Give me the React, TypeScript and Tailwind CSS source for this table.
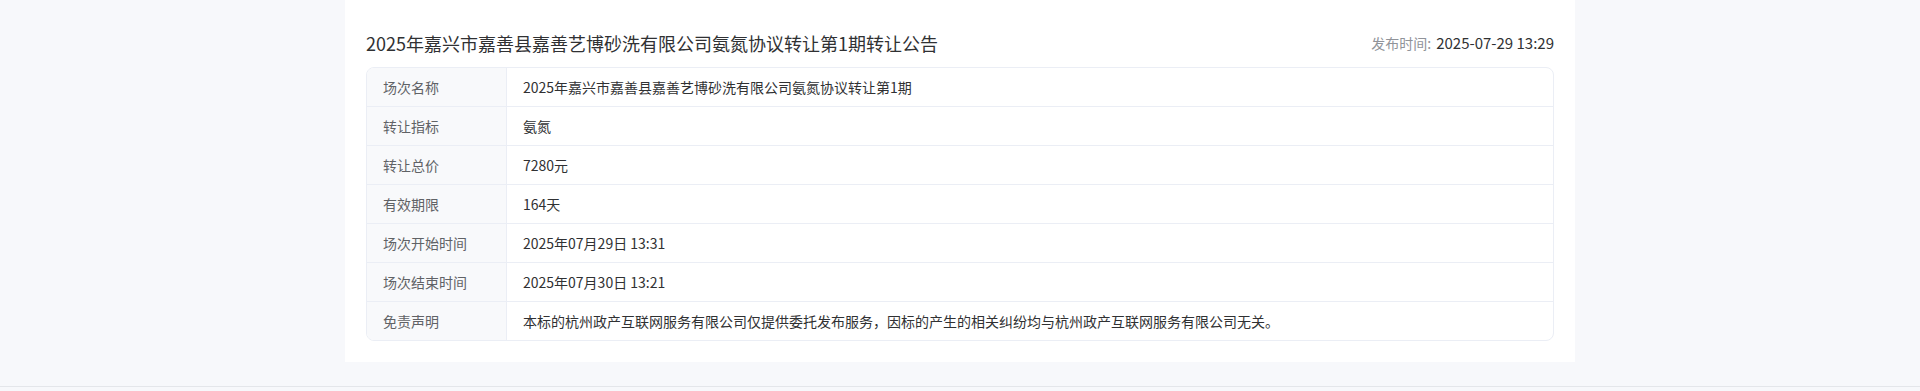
import React from "react";

const rows = [
  { label: "场次名称", value: "2025年嘉兴市嘉善县嘉善艺博砂洗有限公司氨氮协议转让第1期" },
  { label: "转让指标", value: "氨氮" },
  { label: "转让总价", value: "7280元" },
  { label: "有效期限", value: "164天" },
  { label: "场次开始时间", value: "2025年07月29日 13:31" },
  { label: "场次结束时间", value: "2025年07月30日 13:21" },
  {
    label: "免责声明",
    value:
      "本标的杭州政产互联网服务有限公司仅提供委托发布服务，因标的产生的相关纠纷均与杭州政产互联网服务有限公司无关。",
  },
];

const App = () => {
  return (
    <div
      className="w-full h-[391px] overflow-hidden bg-[#f7f8fb]"
      style={{ fontFamily: '"Noto Sans CJK SC", "Noto Sans", sans-serif' }}
    >
      <div className="pb-[24px]">
        <div className="w-[1230px] mx-auto bg-white px-[21px] pb-[21px]">
          <div className="h-[67px] pt-[30px] flex items-start justify-between">
            <h1 className="text-[18px] leading-[26px] text-[#303133] font-normal">
              2025年嘉兴市嘉善县嘉善艺博砂洗有限公司氨氮协议转让第1期转让公告
            </h1>
            <div className="h-[26px] flex items-center text-[14px] leading-[20px]">
              <span className="text-[#909399]">发布时间:</span>
              <span className="ml-[5px] text-[15px] text-[#303133]">2025-07-29 13:29</span>
            </div>
          </div>
          <div className="border border-[#ebeef5] rounded-[8px] overflow-hidden">
            {rows.map((row, i) => (
              <div
                key={row.label}
                className={
                  i < rows.length - 1
                    ? "flex h-[39px] border-b border-[#ebeef5]"
                    : "flex h-[38px]"
                }
              >
                <div className="w-[140px] shrink-0 bg-[#f8f9fb] border-r border-[#ebeef5] px-[16px] flex items-center text-[14px] text-[#606266]">
                  {row.label}
                </div>
                <div className="flex-1 px-[16px] flex items-center text-[14px] text-[#303133]">
                  {row.value}
                </div>
              </div>
            ))}
          </div>
        </div>
      </div>
      <div className="border-t border-[#e4e6ea] h-[20px] bg-[#f7f8fb]" />
    </div>
  );
};

export default App;
